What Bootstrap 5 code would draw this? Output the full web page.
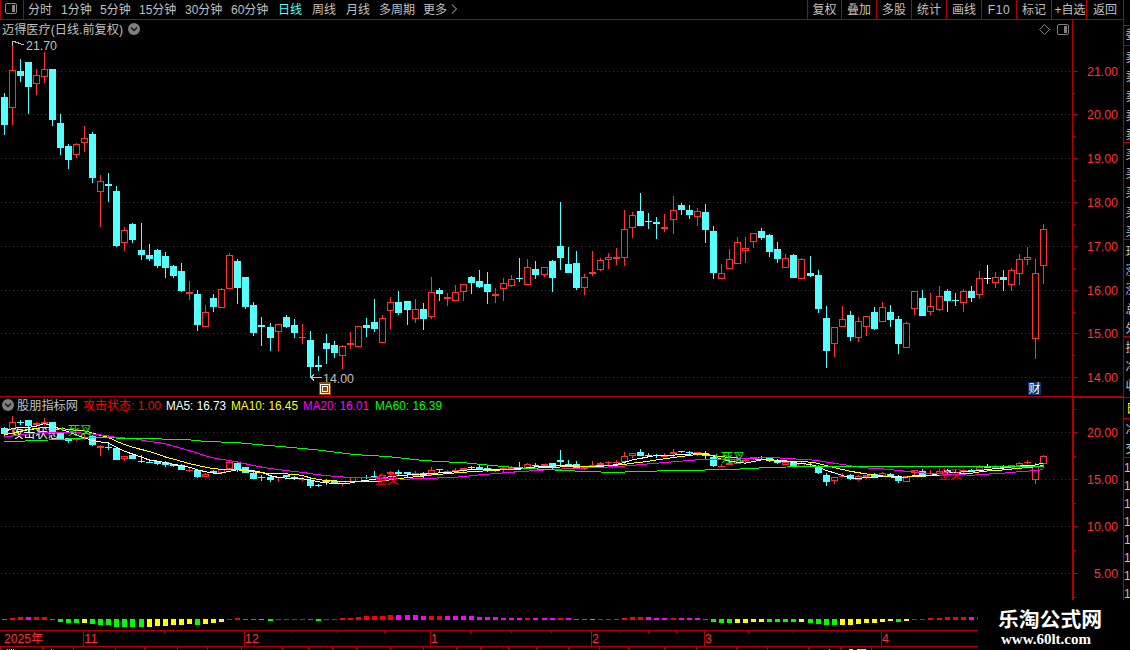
<!DOCTYPE html>
<html lang="zh-CN">
<head>
<meta charset="utf-8">
<title>迈得医疗 日线</title>
<link rel="stylesheet" href="https://cdn.jsdelivr.net/npm/bootstrap@5.3.0/dist/css/bootstrap.min.css">
<style>
:root{--line:#b00000;--hot:#ff3232;--ice:#54ffff;--dim:#c0c0c0}
body{background:#000;color:var(--dim);font:12px/18px "Liberation Sans","Noto Sans CJK SC",sans-serif;width:1130px;height:650px}
svg{display:block}
svg text{font-family:"Liberation Sans","Noto Sans CJK SC",sans-serif;font-size:12px}
.stage{width:1123px}
.topbar{height:20px;border-bottom:1px solid var(--line);line-height:20px}
.dock{width:24px;border-left:1px solid var(--line);border-right:1px solid var(--line)}
.periods{display:grid;grid-template-columns:33px 39px 39px 46px 46px 47px 34px 34px 33px 44px 28px 10px;padding-left:4px}
.periods .active{color:var(--ice)}
.tools{display:grid;grid-template-columns:34px 35px 35px 35px 35px 35px 35px 35px 37px}
.tools span{border-left:1px solid var(--line);text-align:center}
.tools span:nth-child(6){letter-spacing:.6px}
.tools span:nth-child(8){padding-left:2px}
.side{width:7px;height:600px;border-left:1px solid var(--line)}
.brand{right:0;bottom:0;width:152px;height:50px;background:#000}
</style>
</head>
<body class="d-flex position-relative overflow-hidden">
<main class="stage d-flex flex-column flex-shrink-0">
  <header class="topbar d-flex justify-content-between flex-shrink-0">
    <div class="d-flex">
      <div class="dock"><svg width="22" height="18" viewBox="1 0 22 18"><rect x="5.5" y="3.5" width="11" height="10" rx="1.5" fill="none" stroke="#888"/><rect x="12" y="5" width="3" height="7" fill="#888"/></svg></div>
      <nav class="periods text-nowrap"><span>分时</span><span>1分钟</span><span>5分钟</span><span>15分钟</span><span>30分钟</span><span>60分钟</span><span class="active">日线</span><span>周线</span><span>月线</span><span>多周期</span><span>更多</span><svg width="8" height="18" viewBox="0 0 8 18"><path d="M1 4.5L5.5 9L1 13.5" fill="none" stroke="#c0c0c0"/></svg></nav>
    </div>
    <nav class="tools text-nowrap"><span>复权</span><span>叠加</span><span>多股</span><span>统计</span><span>画线</span><span>F10</span><span>标记</span><span>+自选</span><span>返回</span></nav>
  </header>
  <section>
    <svg id="price" width="1123" height="377" viewBox="0 20 1123 377" shape-rendering="crispEdges"></svg>
  </section>
  <section>
    <svg id="study" width="1123" height="253" viewBox="0 397 1123 253" shape-rendering="crispEdges"></svg>
  </section>
</main>
<aside class="side overflow-hidden flex-shrink-0"><svg id="quotes" width="6" height="600" viewBox="1124 0 6 600"></svg></aside>
<div class="brand position-absolute">
  <svg width="152" height="50" viewBox="978 600 152 50">
    <text x="998" y="627" fill="#fff" font-weight="700" textLength="104" lengthAdjust="spacingAndGlyphs" style="font-size:20px">乐淘公式网</text>
    <text x="1001" y="644" fill="#fff" font-weight="700" textLength="90" lengthAdjust="spacingAndGlyphs" style="font-size:14px;font-family:'Liberation Serif',serif">www.60lt.com</text>
  </svg>
</div>
<script src="https://cdn.jsdelivr.net/npm/bootstrap@5.3.0/dist/js/bootstrap.bundle.min.js"></script>
<script>
const RED='#ff3232', ICE='#54ffff', LINE='#b00000', DIM='#c0c0c0';
// one candle per entry: kind, high, body top, body bottom, low
const raw=`c93,97,125,135 r41,70,108,125 c59,71,76,82 c62,62,87,114 r69,75,84,95 r52,69,77,83 c69,69,120,126 c114,123,148,155 c144,146,160,169 r143,144,155,158
r126,138,143,152 c132,134,178,183 r175,181,192,227 c173,184,186,202 c186,191,246,247 r227,230,243,251 c223,224,240,243 c223,250,255,260 c244,255,259,261 c249,250,266,268
c252,256,268,278 c265,266,276,278 c263,271,291,292 r281,292,294,300 c290,294,325,331 r305,312,327,327 c294,298,307,312 r288,289,308,308 r253,255,289,289 c259,261,288,304
c277,277,307,309 c302,305,333,336 c317,325,327,346 c323,327,338,351 r324,324,332,351 c315,317,327,328 c319,325,333,338 r324,337,338,344 c331,340,367,378 c356,365,367,371
c334,343,349,364 c341,345,353,358 r345,346,356,369 r332,343,345,349 r326,326,347,347 c318,325,328,337 c299,322,329,332 r315,318,343,343 r297,302,311,329 c291,302,313,315
c301,301,310,325 r299,309,319,323 c303,309,319,330 r277,292,317,319 c288,290,294,301 r293,297,299,306 r285,292,301,301 r284,284,292,301 c276,277,283,294 c270,281,287,288
c272,284,292,304 r288,294,296,303 r278,283,289,301 r275,279,286,287 c258,278,279,282 r259,267,285,285 c261,269,275,279 r267,267,275,277 c260,261,278,292 c202,246,258,270
c247,264,273,273 c251,263,288,290 r274,277,288,295 r251,272,274,276 r258,260,270,271 r253,257,260,269 r248,257,259,265 r210,229,258,266 r212,215,228,238 c193,211,226,226
c213,221,222,229 c217,222,224,239 r214,227,229,232 r196,210,220,234 c203,205,210,215 c205,210,215,219 r208,211,217,226 c204,212,230,243 c226,231,273,279 r264,273,279,279
r249,259,269,269 r237,242,264,264 r237,248,251,263 r233,233,242,248 c228,231,238,240 c234,235,252,257 c242,249,259,263 r254,258,268,268 c254,255,278,278 r258,259,279,279
c256,273,276,277 c270,275,309,313 c306,318,351,368 r327,327,344,357 r306,319,327,327 c311,315,337,341 r317,321,338,342 r316,316,327,336 c307,312,329,330 r302,307,322,322
c305,312,320,327 c316,319,344,354 r322,323,348,348 r291,291,309,315 c290,298,316,316 r293,306,312,315 r286,296,310,311 c289,291,301,312 c293,300,301,306 r289,291,303,312
c286,291,298,302 r271,278,295,299 w265,278,279,284 r272,277,283,288 c270,277,280,291 r268,270,285,291 r254,259,274,285 r247,257,260,265 r259,273,339,359 r224,229,266,284`;
const bars=raw.split(/\s+/).map(s=>[s[0],...s.slice(1).split(',').map(Number)]);
const extra=[17,33,50,67,83,100,116];
const X=i=>4+8*i+extra.filter(e=>i>=e).length;
const rect=(x,y,w,h,f)=>`<rect x="${x}" y="${y}" width="${w}" height="${h}" fill="${f}"/>`;
const label=(x,y,s,f,w)=>`<text x="${x}" y="${y}" fill="${f}"${w?` textLength="${w}" lengthAdjust="spacingAndGlyphs"`:''}>${s}</text>`;
const dots=(y,end)=>`<path d="M1 ${y+.5}H${end}" stroke="${LINE}" stroke-dasharray="1 3"/>`;
function candles(map){
  return bars.map(([k,h,t,b,l],i)=>{
    const x=X(i),c=k=='c'?ICE:k=='r'?RED:'#fff';
    [h,t,b,l]=[h,t,b,l].map(map);
    if(b<=t)b=t+1; if(l<b)l=b; if(h>t)h=t;
    let o=rect(x,h,1,t-h,c)+rect(x,b,1,l-b,c);
    return o+(k=='r'&&b-t>2?`<rect x="${x-2.5}" y="${t+.5}" width="6" height="${b-t-1}" fill="none" stroke="${c}"/>`:rect(x-3,t,7,b-t,c));
  }).join('');
}
const chev=(x,y)=>`<g shape-rendering="auto"><circle cx="${x}" cy="${y}" r="6" fill="#808080"/><path d="M${x-3} ${y-1.5}l3 3l3-3" fill="none" stroke="#111" stroke-width="1.4"/></g>`;

// price panel
let p='';
[71,114,158,202,246,290,333,377].forEach((y,i)=>{p+=dots(y,1072)+rect(1073,y,5,1,LINE)+label(1087,y+5,(21-i)+'.00',RED,31)});
[93,136,180,224,268,312,355].forEach(y=>p+=rect(1073,y,2,1,LINE));
p+=rect(1072,20,1,377,LINE)+rect(0,396,1073,1,LINE)+rect(1072,396,51,1,LINE);
p+=candles(v=>v);
p+=label(2,34,'迈得医疗(日线.前复权)',DIM,121)+chev(134,29);
p+=`<path d="M12.5 46V41.5M12 41.5H16M13 41.5L17 42.5L20 43.5L24 45" fill="none" stroke="${DIM}"/>`+label(26,50,'21.70',DIM,31);
p+=`<path d="M310 377.5H322M311 377.5L314 374.5M311 377.5L314 380.5" fill="none" stroke="${DIM}"/>`+label(323,383,'14.00',DIM,31);
p+=rect(319,382,12,13,'#904800')+`<rect x="320.5" y="384.5" width="9" height="9" fill="none" stroke="#fff"/><rect x="322.5" y="386.5" width="5" height="5" fill="none" stroke="#fff"/>`;
p+=rect(1028,382,13,13,'#003870')+label(1028.5,393,'财','#fff',12);
p+=`<g shape-rendering="auto" fill="none" stroke="#808080"><path d="M1044.5 24.5l5 5l-5 5l-5-5z"/><rect x="1057.5" y="24.5" width="11" height="10" rx="1.5"/><path d="M1065.5 26v7" stroke-width="3"/></g>`;
price.innerHTML=p;

// study panel
const fine=v=>422.3+(v-71)*.2149, small=v=>Math.round(fine(v));
let s='';
[432,479,526,573].forEach((y,i)=>{s+=dots(y,1072)+rect(1074,y,4,1,LINE)+label(i==3?1094:1087,y+5,(20-5*i).toFixed(2),RED,i==3?24:31)});
[409,456,503,550,597].forEach(y=>s+=rect(1074,y,2,1,LINE));
s+=rect(1072,397,2,234,LINE)+rect(1072,397,51,1,LINE);
s+=label(11,438,'攻击状态','#fff',49);
s+=candles(small);
const close=bars.map(b=>b[0]=='r'?b[2]:b[3]-1);
function curve(pts,color){return `<polyline points="${pts.map(q=>(q[0]+.5)+','+(q[1]+.5).toFixed(1)).join(' ')}" fill="none" stroke="${color}"/>`}
function average(n,head,color){
  const pts=head.map((y,i)=>[X(i),y]);
  for(let i=head.length;i<close.length;i++)pts.push([X(i),fine(close.slice(i-n+1,i+1).reduce((a,b)=>a+b)/n)]);
  return curve(pts,color);
}
s+=average(5,[431,428,427,427],'#fff');
s+=average(10,[434,433,431,429,428,427,427,428,429],'#ff0');
s+=average(20,[436,435.5,434.5,433.5,433,432,432,432,432,432,433,433.5,434.5,435.5,437,437.5,438,439.5,441],'#f0f');
s+=curve([[4,441],[25,440.5],[60,439],[92,437],[137,438],[185,439],[200,440.5],[240,442.5],[280,446],[313,449],[353,454],[387,456],[423,460],[440,461],[466,462.5],[486,464.5],[508,466.5],[528,468],[554,469.5],[585,471],[616,472],[634,471],[680,470],[730,469],[768,467],[805,466],[1043,466]],'#0f0');
const G='#0f0';
s+=label(68,435,'死叉',G,24)+label(721,462,'死叉',G,24)+label(375,484,'金叉','#f00',24)+label(938,479,'金叉','#f00',24);
s+=`<path d="M60 429l3-2v4zM714 456l3-2v4z" fill="${G}"/>`;
s+=chev(8,405)+label(17,410,'股朋指标网',DIM,61)+label(83,410,'攻击状态: 1.00','#f00',78)+label(166,410,'MA5: 16.73','#fff',60)+label(231,410,'MA10: 16.45','#ff0',67)+label(303,410,'MA20: 16.01','#f0f',66)+label(375,410,'MA60: 16.39','#0f0',67);
// state strip: colour and far edge relative to the 619 baseline
const strip=`m0 r-1 r-2 m-2 r-2 r-2 m0 g3 g4 g4 y4 g5 g6 g6 g8 g8 g8 g8 y8 y7 y7 y6 y6 y5 g6 y5 y4 y3 r0 r-1 m0 m0 g0 g2 r0 r0 r0 r0 m0 g2 r0 r0 r-1 r-1 r-2 r-3 r-3 r-3 r-4 m-4 m-4 m-4 m-3 r-3 r-3 m-3 m-3 m-3 m-3 m-2 m-2 m-2 m-1 m-1 m-1 r-1 m-1 m-1 m-1 r-1 m-1 m0 m0 g0 r0 r0 r0 r-1 r-2 r-2 m-2 m-1 m-1 r-1 m-1 m-1 m-1 m0 g3 g4 g4 y4 y4 y3 y3 g3 g3 g3 g3 y3 g4 g5 g6 g6 y6 y6 y5 y4 y4 y3 y2 g3 y2 r0 r0 r-1 r-1 r-2 r-2 r-2 m-2 r-2`.split(' ');
const tint={m:'#f0f',r:'#f00',g:'#0f0',y:'#ff0'};
strip.forEach((q,i)=>{
  let v=+q.slice(1),top=v<0?619+v:619,h=v>0?v:1-v;
  if(v<=-3)h=(v==-4?5:4);
  s+=rect(X(i)-2,top,5,h,tint[q[0]]);
});
s+=rect(0,630,978,1,LINE)+rect(0,646,978,1,LINE);
[[83,'11'],[244,'12'],[430,'1'],[591,'2'],[704,'3'],[881,'4']].forEach(([x,t])=>s+=rect(x,630,1,16,LINE)+label(x+1,643,t,RED,t.length*6.9));
[123,164,291,337,384,470,511,551,619,648,676,748,793,837].forEach(x=>s+=rect(x,631,1,2,LINE));
[0,42,73,115,144,177,207,241,282,308,332,356,390,423,456,480,508,536,568,599,628,664,696,736,767,808,840,871].forEach(x=>s+=rect(x,647,1,3,LINE));
s+=label(4,643,'2025年',RED,39);
s+=[7,9,11,13,51,829].map(x=>rect(x,649,1,1,DIM)).join('')+rect(849,649,4,1,ICE)+rect(857,649,9,1,ICE);
study.innerHTML=s;

// left edge of the neighbouring quote list
let q='';
[25,45,142,239,336,397,418,457].forEach(y=>q+=rect(1124,y,6,1,LINE));
[['委',40],['卖',63],['卖',82],['卖',102],['卖',121],['卖',140],['买',160],['买',179],['买',198],['买',218],['买',237],['现',257],['涨',276],['涨',295],['总',315],['外',334],['换',353],['净',372],['收',391]].forEach(([t,y])=>q+=label(1125.5,y-1,t,DIM));
q+=label(1126,413,'日','#ff0')+label(1125.5,434,'净',DIM)+label(1125.5,453,'交',DIM);
for(let y=472;y<600;y+=18)q+=label(1124,y,'1',DIM);
quotes.innerHTML=q;
</script>
</body>
</html>
